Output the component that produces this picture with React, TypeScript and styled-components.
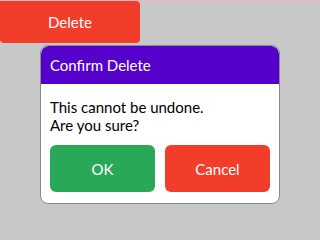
import React from "react";
import styled, { createGlobalStyle } from "styled-components";

const Global = createGlobalStyle`
  html, body { margin: 0; padding: 0; }
  body {
    background: #c8c8c8;
    font-family: "Lato", "Noto Sans", sans-serif;
    width: 320px;
    height: 240px;
    overflow: hidden;
  }
`;

const Page = styled.div`
  border-top: 1px solid #f7b6c2;
  height: 239px;
  display: flex;
  flex-direction: column;
  align-items: flex-start;
`;

const DeleteButton = styled.button`
  width: 140px;
  height: 42px;
  margin: 0;
  border: none;
  border-radius: 0 4px 4px 4px;
  background: #f23d2b;
  color: #fff;
  font-family: inherit;
  font-size: 15px;
  padding: 0;
`;

const Dialog = styled.div`
  margin: 2px 0 0 40px;
  width: 240px;
  box-sizing: border-box;
  border: 1px solid #8a8a8a;
  border-radius: 8px;
  background: #fff;
  overflow: hidden;
  display: flex;
  flex-direction: column;
`;

const Header = styled.div`
  height: 38px;
  background: #5500cb;
  color: #fff;
  font-size: 15px;
  display: flex;
  align-items: center;
  padding: 0 9px;
  border-radius: 8px 8px 0 0;
`;

const Body = styled.div`
  padding: 14px 9px 11px 9px;
  display: flex;
  flex-direction: column;
`;

const Message = styled.div`
  color: #000;
  font-size: 15px;
  line-height: 18px;
  margin-bottom: 11px;
`;

const Actions = styled.div`
  display: flex;
  gap: 10px;
`;

const ActionButton = styled.button<{ $color: string }>`
  flex: 1;
  height: 47px;
  border: none;
  border-radius: 6px;
  background: ${(p) => p.$color};
  color: #fff;
  font-family: inherit;
  font-size: 15px;
  padding: 0;
`;

export default function App() {
  return (
    <>
      <Global />
      <Page>
        <DeleteButton>Delete</DeleteButton>
        <Dialog>
          <Header>Confirm Delete</Header>
          <Body>
            <Message>
              This cannot be undone.
              <br />
              Are you sure?
            </Message>
            <Actions>
              <ActionButton $color="#29a857">OK</ActionButton>
              <ActionButton $color="#f23d2b">Cancel</ActionButton>
            </Actions>
          </Body>
        </Dialog>
      </Page>
    </>
  );
}
